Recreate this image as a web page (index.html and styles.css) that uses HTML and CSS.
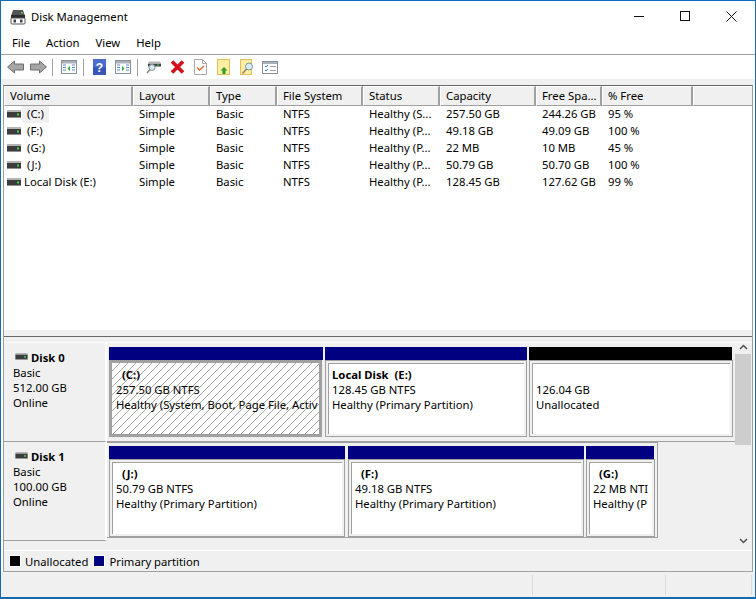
FILE: index.html
```html
<!DOCTYPE html>
<html lang="en">
<head>
<meta charset="utf-8">
<title>Disk Management</title>
<link rel="stylesheet" href="styles.css">
</head>
<body>
<svg class="defs" width="0" height="0" aria-hidden="true">
  <symbol id="drive" viewBox="0 0 14 8">
    <rect x="0" y="0" width="14" height="3" fill="#b4b4b4"/>
    <rect x="0" y="2" width="14" height="5" fill="#3c3c3c"/>
    <rect x="0" y="7" width="14" height="1" fill="#909090"/>
    <rect x="10" y="3.5" width="2" height="2" fill="#3fd24a"/>
  </symbol>
</svg>
<div class="window">
  <header class="titlebar">
    <svg class="app-icon" viewBox="0 0 16 16">
      <path d="M3 1h10l2 6H1z" fill="#555"/>
      <rect x="1" y="6" width="14" height="3" fill="#2c2c2c"/>
      <rect x="11" y="3" width="2" height="1.5" fill="#3fd24a"/>
      <rect x="1" y="9" width="14" height="6" rx="1" fill="#fff" stroke="#555"/>
      <rect x="3.5" y="10.5" width="2.5" height="3" fill="#444"/>
      <rect x="10" y="10.5" width="2.5" height="3" fill="#444"/>
    </svg>
    <span class="app-title">Disk Management</span>
    <div class="winbtns">
      <span class="winbtn"><svg width="10" height="10" viewBox="0 0 10 10"><path d="M0 5.5h10" stroke="#111"/></svg></span>
      <span class="winbtn"><svg width="10" height="10" viewBox="0 0 10 10"><rect x=".5" y=".5" width="9" height="9" fill="none" stroke="#111"/></svg></span>
      <span class="winbtn"><svg width="11" height="11" viewBox="0 0 11 11"><path d="M.5.5l10 10M10.500.5l-10 10" stroke="#111"/></svg></span>
    </div>
  </header>
  <nav class="menubar"><span>File</span><span>Action</span><span>View</span><span>Help</span></nav>
  <div class="toolbar">
    <svg class="ti w17" viewBox="0 0 17 14"><path d="M.5 7L7.500 1v3h9v6h-9v3z" fill="#a6a6a6" stroke="#6e6e6e"/></svg>
    <svg class="ti w17 g6" viewBox="0 0 17 14"><path d="M16.500 7L9.500 1v3h-9v6h9v3z" fill="#a6a6a6" stroke="#6e6e6e"/></svg>
    <i class="tsep s5"></i>
    <svg class="ti w16 g8" viewBox="0 0 16 14"><rect x=".5" y=".5" width="15" height="13" fill="#fff" stroke="#8a9098"/><rect x="1" y="1" width="14" height="2.500" fill="#a8b0b8"/><path d="M2 5h3M2 7.500h3M2 10h3M11 5h3M11 7.500h3M11 10h3" stroke="#5b8fc0"/><path d="M9 6v5L6.500 8.500z" fill="#2fae3c"/></svg>
    <i class="tsep s6"></i>
    <svg class="ti w13 g9" viewBox="0 0 13 16"><rect width="13" height="16" fill="#3a56b4"/><rect x="0" y="0" width="13" height="8" fill="#4c6cd0"/><text x="6.500" y="13" class="qm">?</text></svg>
    <svg class="ti w16 g9" viewBox="0 0 16 14"><rect x=".5" y=".5" width="15" height="13" fill="#fff" stroke="#8a9098"/><rect x="1" y="1" width="14" height="2.500" fill="#a8b0b8"/><path d="M2 5h3M2 7.500h3M2 10h3M11 5h3M11 7.500h3M11 10h3" stroke="#5b8fc0"/><path d="M7 6v5l2.500-2.500z" fill="#2fae3c"/></svg>
    <i class="tsep s6"></i>
    <svg class="ti w15 g8" viewBox="0 0 15 13"><path d="M2 3h13v3H2z" fill="#444"/><path d="M3 1h11l1 2H2z" fill="#b8b8b8"/><rect x="11" y="4" width="2" height="1" fill="#3fd24a"/><circle cx="6" cy="7" r="3" fill="#d8eaf6" stroke="#8094a4"/><path d="M4 9l-3 3.500" stroke="#8a8a6a" stroke-width="1.500"/></svg>
    <svg class="ti w15 g9" viewBox="0 0 15 15"><path d="M2 2l5.500 5.500L13 2M2 13l5.500-5.500L13 13" stroke="#d2101c" stroke-width="3.600" fill="none"/></svg>
    <svg class="ti w13 g9" viewBox="0 0 13 16"><path d="M.5.500h8l4 4v11H.500z" fill="#fff" stroke="#a8a8a8"/><path d="M8.500.500v4h4" fill="none" stroke="#a8a8a8"/><path d="M3 8.500l2.500 2.500L10 7" fill="none" stroke="#e8662a" stroke-width="1.300"/></svg>
    <svg class="ti w13 g10" viewBox="0 0 13 16"><rect x=".5" y=".5" width="12" height="15" fill="#fdeea4" stroke="#e2bf58"/><path d="M7 8l-3.500 3.500h2v3.500h3v-3.500h2z" fill="#2e9e2a"/></svg>
    <svg class="ti w14 g10" viewBox="0 0 14 16"><rect x=".5" y=".5" width="11" height="15" fill="#fdeea4" stroke="#e2bf58"/><circle cx="9" cy="7.500" r="3.500" fill="#d8eaf6" stroke="#8094a4"/><path d="M6.500 10l-4 4.500" stroke="#8a8a6a" stroke-width="1.600"/></svg>
    <svg class="ti w16 g8" viewBox="0 0 16 14"><rect x=".5" y="1.500" width="15" height="12" fill="#fff" stroke="#8a9098"/><rect x="1" y="2" width="14" height="2" fill="#a8b0b8"/><path d="M3 6l1 1 2-2M3 10l1 1 2-2" fill="none" stroke="#3878c8"/><path d="M8 6.500h6M8 10.500h6" stroke="#9aa0a6"/></svg>
  </div>
  <div class="band"></div>
  <main class="frame">
    <section class="list">
      <div class="row head">
        <span>Volume</span><span>Layout</span><span>Type</span><span>File System</span><span>Status</span><span>Capacity</span><span>Free Spa...</span><span>% Free</span><span></span>
      </div>
      <div class="row">
        <span class="vol"><svg class="sdrive"><use href="#drive"/></svg><b class="vname sel">(C:)</b></span><span>Simple</span><span>Basic</span><span>NTFS</span><span>Healthy (S...</span><span>257.50 GB</span><span>244.26 GB</span><span>95 %</span><span></span>
      </div>
      <div class="row">
        <span class="vol"><svg class="sdrive"><use href="#drive"/></svg><b class="vname ind">(F:)</b></span><span>Simple</span><span>Basic</span><span>NTFS</span><span>Healthy (P...</span><span>49.18 GB</span><span>49.09 GB</span><span>100 %</span><span></span>
      </div>
      <div class="row">
        <span class="vol"><svg class="sdrive"><use href="#drive"/></svg><b class="vname ind">(G:)</b></span><span>Simple</span><span>Basic</span><span>NTFS</span><span>Healthy (P...</span><span>22 MB</span><span>10 MB</span><span>45 %</span><span></span>
      </div>
      <div class="row">
        <span class="vol"><svg class="sdrive"><use href="#drive"/></svg><b class="vname ind">(J:)</b></span><span>Simple</span><span>Basic</span><span>NTFS</span><span>Healthy (P...</span><span>50.79 GB</span><span>50.70 GB</span><span>100 %</span><span></span>
      </div>
      <div class="row">
        <span class="vol"><svg class="sdrive"><use href="#drive"/></svg><b class="vname">Local Disk (E:)</b></span><span>Simple</span><span>Basic</span><span>NTFS</span><span>Healthy (P...</span><span>128.45 GB</span><span>127.62 GB</span><span>99 %</span><span></span>
      </div>
    </section>
    <div class="splitter"></div>
    <section class="graph">
      <div class="disks">
        <div class="disk d0">
          <div class="dlabel">
            <div class="dname"><svg class="sdrive small"><use href="#drive"/></svg><strong>Disk 0</strong></div>
            <div>Basic</div><div>512.00 GB</div><div>Online</div>
          </div>
          <div class="parts">
            <div class="part wc"><div class="cap navy"></div><div class="pbody selected"><div class="pin"><strong class="pn">(C:)</strong><div>257.50 GB NTFS</div><div>Healthy (System, Boot, Page File, Activ</div></div></div></div>
            <div class="part we"><div class="cap navy"></div><div class="pbody"><div class="pin"><strong class="pn flush">Local Disk&nbsp; (E:)</strong><div>128.45 GB NTFS</div><div>Healthy (Primary Partition)</div></div></div></div>
            <div class="part wu"><div class="cap black"></div><div class="pbody"><div class="pin"><div class="pn"></div><div>126.04 GB</div><div>Unallocated</div></div></div></div>
          </div>
        </div>
        <div class="disk d1">
          <div class="dlabel">
            <div class="dname"><svg class="sdrive small"><use href="#drive"/></svg><strong>Disk 1</strong></div>
            <div>Basic</div><div>100.00 GB</div><div>Online</div>
          </div>
          <div class="parts p1">
            <div class="part wj"><div class="cap navy"></div><div class="pbody"><div class="pin"><strong class="pn">(J:)</strong><div>50.79 GB NTFS</div><div>Healthy (Primary Partition)</div></div></div></div>
            <div class="part wf"><div class="cap navy"></div><div class="pbody"><div class="pin"><strong class="pn">(F:)</strong><div>49.18 GB NTFS</div><div>Healthy (Primary Partition)</div></div></div></div>
            <div class="part wg"><div class="cap navy"></div><div class="pbody"><div class="pin"><strong class="pn">(G:)</strong><div>22 MB NTI</div><div>Healthy (P</div></div></div></div>
          </div>
        </div>
      </div>
      <div class="scrollbar">
        <svg class="arrow" width="9" height="6" viewBox="0 0 9 6"><path d="M1 5l3.500-3.500L8 5" fill="none" stroke="#505050" stroke-width="1.500"/></svg>
        <div class="track"><div class="thumb"></div></div>
        <svg class="arrow" width="9" height="6" viewBox="0 0 9 6"><path d="M1 1l3.500 3.500L8 1" fill="none" stroke="#505050" stroke-width="1.500"/></svg>
      </div>
    </section>
    <div class="legend">
      <i class="swatch black"></i><span>Unallocated</span>
      <i class="swatch navy s2"></i><span>Primary partition</span>
    </div>
  </main>
  <footer class="status"><span class="st1"></span><span class="st2"></span><span class="st3"></span></footer>
</div>
</body>
</html>
```

FILE: styles.css
```css
* { box-sizing: border-box; }
html, body { margin: 0; padding: 0; }
body {
  width: 756px; height: 599px; overflow: hidden; background: #fff; color: #000;
  font: 11.3px/15px "Noto Sans", "Open Sans", sans-serif;
}
.defs { position: absolute; }
.window {
  width: 756px; height: 599px; display: flex; flex-direction: column;
  border: 1px solid #0f6cb4; border-bottom-width: 2px; background: #fff;
}
.titlebar { height: 29px; flex: none; display: flex; align-items: center; padding-left: 9px; }
.app-icon { width: 16px; height: 16px; margin-top: 2px; }
.app-title { margin-left: 5px; margin-top: 1px; }
.winbtns { margin-left: auto; display: flex; height: 29px; margin-right: 1px; }
.winbtn { width: 46px; display: flex; align-items: center; justify-content: center; margin-top: 1px; }
.menubar {
  height: 25px; flex: none; display: flex; gap: 16px; padding-left: 11px; align-items: center;
  border-bottom: 1px solid #a0a0a0;
}
.toolbar { height: 24px; flex: none; display: flex; align-items: center; padding-left: 6px; background: #fff; }
.ti { height: 16px; flex: none; display: block; }
.w13 { width: 13px; } .w14 { width: 14px; } .w15 { width: 15px; } .w16 { width: 16px; } .w17 { width: 17px; }
.g6 { margin-left: 6px; } .g8 { margin-left: 8px; } .g9 { margin-left: 9px; } .g10 { margin-left: 10px; }
.tsep { width: 1px; height: 17px; background: #a0a0a0; flex: none; }
.s5 { margin-left: 5px; }
.s6 { margin-left: 6px; }
.qm { font: bold 12px "Liberation Sans", sans-serif; fill: #fff; text-anchor: middle; }
.band { height: 6px; flex: none; background: #f0f0f0; }
.frame {
  flex: 1; min-height: 0; margin: 0 2px 0 2px; display: flex; flex-direction: column;
  border: 1px solid #a0a0a0; border-top-color: #696969; border-bottom-color: #a0a0a0; background: #f0f0f0;
}
.list { height: 244px; flex: none; background: #fff; }
.row {
  display: grid; height: 17px;
  grid-template-columns: 129px 77px 67px 86px 77px 96px 66px 91px 1fr;
}
.row > span { padding-left: 6px; line-height: 16px; white-space: nowrap; overflow: hidden; }
.head { height: 20px; background: #f0f0f0; }
.head > span {
  line-height: 18px; border-right: 2px solid #a0a0a0; border-bottom: 1px solid #a0a0a0;
  border-top: 1px solid #fff; border-left: 1px solid #fff; padding-left: 5px;
}
.head > span:last-child { border-right: 0; }
.row > .vol { display: flex; align-items: center; padding-left: 3px; }
.row > .vol .sdrive { margin-top: -2px; }
.sdrive { width: 14px; height: 8px; flex: none; }
.vname { font-weight: 400; margin-left: 3px; line-height: 16px; align-self: stretch; }
.ind { margin-left: 6px; }
.sel { background: #f0f0f0; margin-left: 1px; padding: 0 5px; }
.splitter { height: 13px; flex: none; background: #f0f0f0; border-bottom: 1px solid #fff; }
.splitter::before { content: ""; display: block; height: 1px; background: #696969; margin-top: 6px; }
.graph { flex: 1; min-height: 0; display: flex; }
.disks { flex: 1; min-width: 0; }
.disk { display: flex; }
.d0 { height: 99px; }
.d1 { height: 99px; }
.dlabel {
  width: 103px; flex: none; padding: 7px 0 0 9px; background: #f0f0f0; border-right: 2px solid #fff;
  border-bottom: 1px solid #a0a0a0;
}
.dname { display: flex; align-items: center; height: 15px; margin-left: 2px; }
.dname strong { margin-left: 3px; }
.small { width: 13px; height: 7px; margin-top: -3px; }
.parts { flex: 1; display: flex; gap: 2px; padding: 4px 0 4px 2px; border-bottom: 1px solid #a0a0a0; min-width: 0; }
.p1 { flex: none; width: 551px; height: 96px; border: 1px solid #a0a0a0; border-left: 0; padding-bottom: 0; gap: 3px; padding-top: 3px; }
.part { display: flex; flex-direction: column; flex: none; min-width: 0; }
.wc { width: 214px; } .we { width: 202px; } .wu { width: 204px; }
.wj { width: 236px; } .wf { width: 236px; } .wg { width: 69px; margin-left: -1px; }
.wu .cap, .wg .cap { margin-right: 1px; }
.cap { height: 13px; flex: none; }
.navy { background: #000080; }
.black { background: #000; }
.pbody {
  flex: 1; min-height: 0; padding: 2px; background: #f0f0f0; border: 1px solid #a0a0a0;
  overflow: hidden;
}
.pin {
  height: 100%; background: #fff; border-left: 1px solid #a0a0a0; border-top: 1px solid #a0a0a0;
  padding: 3px 3px 0 3px; white-space: nowrap; overflow: hidden;
}
.pn { display: block; padding-left: 6px; height: 15px; }
.flush { padding-left: 0; }
.selected { border: 3px solid #a0a0a0; padding: 0; margin-right: 1px; background: #fff; }
.selected .pin {
  border: 0; padding: 4px 0 0 4px;
  background: #fff url("data:image/svg+xml,%3Csvg xmlns='http://www.w3.org/2000/svg' width='8' height='8'%3E%3Cpath d='M7 0h1v1H7zM6 1h1v1H6zM5 2h1v1H5zM4 3h1v1H4zM3 4h1v1H3zM2 5h1v1H2zM1 6h1v1H1zM0 7h1v1H0z' fill='%23a8a8a8'/%3E%3C/svg%3E");
}
.scrollbar { width: 16px; flex: none; margin-right: 1px; display: flex; flex-direction: column; align-items: center; background: #f0f0f0; padding: 1px 0 6px; }
.arrow { flex: none; }
.track { flex: 1; width: 16px; margin-top: 4px; }
.thumb { height: 91px; background: #cdcdcd; }
.legend {
  height: 21px; flex: none; display: flex; align-items: center; padding-left: 5px; gap: 4px;
  border-top: 1px solid #fff; background: #f0f0f0;
}
.swatch { width: 12px; height: 12px; flex: none; border: 1px solid #fff; }
.s2 { margin-left: 1px; }
.status { height: 25px; flex: none; display: flex; background: #f0f0f0; padding: 3px 2px 2px 0; }
.status span { display: block; border-right: 1px solid #dadada; }
.st1 { width: 532px; } .st2 { width: 133px; } .st3 { width: 86px; }
```
